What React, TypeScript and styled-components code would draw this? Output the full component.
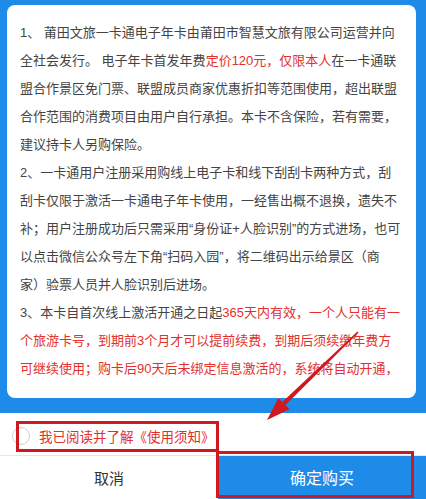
import React from 'react';
import styled, { createGlobalStyle } from 'styled-components';

const BLUE = '#1f8be9';
const RED = '#e3302d';
const MARK = '#cf1820';

const GlobalStyle = createGlobalStyle`
  html, body {
    margin: 0;
    padding: 0;
    background: #fff;
  }
  body {
    font-family: "Liberation Sans", "Noto Sans CJK SC", sans-serif;
  }
`;

const Page = styled.div`
  position: relative;
  width: 426px;
  height: 499px;
  display: flex;
  flex-direction: column;
  overflow: hidden;
`;

const Stage = styled.div`
  background: ${BLUE};
  padding: 5px 10px 15px 7px;
`;

const Card = styled.div`
  background: #fff;
  height: 393px;
  border-radius: 8px;
  overflow: hidden;
  padding: 14px 10px 0 13px;
  box-sizing: border-box;
`;

const Para = styled.p`
  margin: 0;
  font-size: 13px;
  line-height: 28px;
  color: #444;
  white-space: nowrap;
`;

const Hot = styled.span`
  color: ${RED};
`;

const CheckRow = styled.label`
  display: flex;
  align-items: center;
  gap: 9px;
  height: 42px;
  padding: 4px 0 0 12px;
  box-sizing: border-box;
  background: #fff;
`;

const Circle = styled.span`
  width: 18px;
  height: 18px;
  border-radius: 50%;
  border: 1px solid #cfcfcf;
  box-sizing: border-box;
  flex-shrink: 0;
`;

const CheckText = styled.span`
  font-size: 13.5px;
  color: ${RED};
`;

const ButtonRow = styled.div`
  display: flex;
  height: 44px;
  border-top: 1px solid #e6e6e6;
`;

const ActionButton = styled.button<{ primary?: boolean }>`
  border: 0;
  margin: 0;
  padding: 0;
  font-family: inherit;
  display: flex;
  align-items: center;
  justify-content: center;
  width: ${p => (p.primary ? '208px' : '218px')};
  background: ${p => (p.primary ? BLUE : '#fff')};
  color: ${p => (p.primary ? '#fff' : '#333')};
  font-size: ${p => (p.primary ? '16px' : '15px')};
`;

// annotation boxes drawn over the screenshot
const MarkBox = styled.div<{ x: number; y: number; w: number; h: number }>`
  position: absolute;
  left: ${p => p.x}px;
  top: ${p => p.y}px;
  width: ${p => p.w}px;
  height: ${p => p.h}px;
  border: 3px solid ${MARK};
  box-sizing: border-box;
  pointer-events: none;
`;

const ArrowLayer = styled.svg`
  position: absolute;
  left: 0;
  top: 0;
  pointer-events: none;
`;

export default function App() {
  return (
    <Page>
      <GlobalStyle />
      <Stage>
        <Card>
          <Para>
            1、 莆田文旅一卡通电子年卡由莆田市智慧文旅有限公司运营并向<br />
            全社会发行。 电子年卡首发年费<Hot>定价120元，仅限本人</Hot>在一卡通联<br />
            盟合作景区免门票、联盟成员商家优惠折扣等范围使用，超出联盟<br />
            合作范围的消费项目由用户自行承担。本卡不含保险，若有需要，<br />
            建议持卡人另购保险。
          </Para>
          <Para>
            2、一卡通用户注册采用购线上电子卡和线下刮刮卡两种方式，刮<br />
            刮卡仅限于激活一卡通电子年卡使用，一经售出概不退换，遗失不<br />
            补；用户注册成功后只需采用“身份证+人脸识别”的方式进场，也可<br />
            以点击微信公众号左下角“扫码入园”，将二维码出示给景区（商<br />
            家）验票人员并人脸识别后进场。
          </Para>
          <Para>
            3、本卡自首次线上激活开通之日起<Hot>365天内有效，一个人只能有一<br />
            个旅游卡号，到期前3个月才可以提前续费，到期后须续缴年费方<br />
            可继续使用；购卡后90天后未绑定信息激活的，系统将自动开通，</Hot>
          </Para>
        </Card>
      </Stage>
      <CheckRow>
        <Circle />
        <CheckText>我已阅读并了解《使用须知》</CheckText>
      </CheckRow>
      <ButtonRow>
        <ActionButton>取消</ActionButton>
        <ActionButton primary>确定购买</ActionButton>
      </ButtonRow>

      <MarkBox x={16} y={421} w={203} h={31} />
      <MarkBox x={216} y={451} w={198} h={47} />
      <ArrowLayer width={426} height={499} viewBox="0 0 426 499">
        <polygon points="358.6,332.6 357.4,331.4 282.3,402.1 285.3,405.3" fill={MARK} />
        <polygon points="267,420 278.4,397.9 289.5,409.2" fill={MARK} />
      </ArrowLayer>
    </Page>
  );
}
